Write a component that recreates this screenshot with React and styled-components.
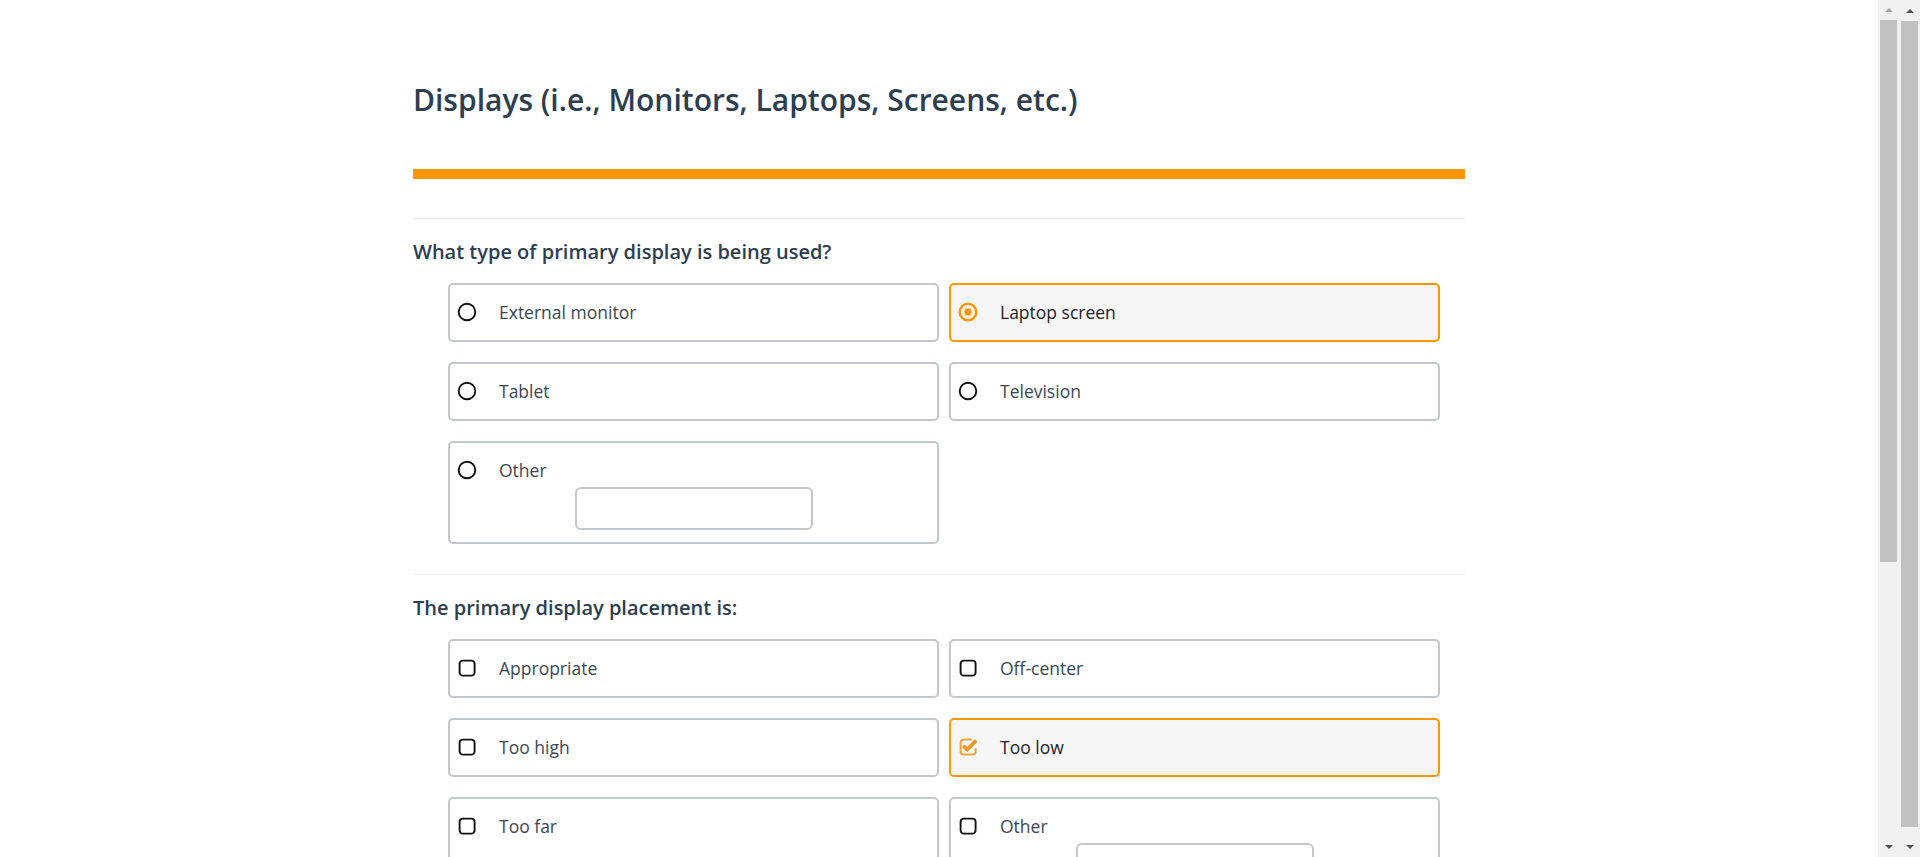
import styled, { createGlobalStyle } from 'styled-components'

const GlobalStyle = createGlobalStyle`
  html, body {
    margin: 0;
    overflow: hidden;
  }

  body {
    background: #ffffff;
    font-family: 'Open Sans', 'Liberation Sans', sans-serif;
  }

  * {
    box-sizing: border-box;
  }
`

const Frame = styled.div`
  display: flex;
  height: 100vh;
`

const Scroller = styled.div`
  flex: 1;
  overflow: hidden;
`

const ScrollBar = styled.div`
  display: flex;
  flex-direction: column;
  align-items: center;
  width: 21px;
  height: 100vh;
  background: #f1f1f1;
`

const Arrow = styled.div`
  display: flex;
  align-items: center;
  justify-content: center;
  height: ${({ $size }) => $size}px;

  &::before {
    content: '';
    border-left: 4px solid transparent;
    border-right: 4px solid transparent;
    ${({ $down }) => ($down ? 'border-top' : 'border-bottom')}: 4px solid
      ${({ $dim }) => ($dim ? '#a3a3a3' : '#505050')};
  }
`

const Thumb = styled.div`
  width: 17px;
  height: ${({ $size }) => $size}px;
  background: #c1c1c1;
`

const Track = styled.div`
  flex: 1;
`

const Container = styled.main`
  width: 1052px;
  margin: 0 auto;
  padding: 82px 0 370px;
`

const Title = styled.h1`
  margin: 0;
  font-size: 30px;
  line-height: 36px;
  font-weight: 600;
  color: #2c3e50;
`

const Accent = styled.div`
  height: 10px;
  margin: 51px 0 39px;
  background: #ff9800;
`

const Section = styled.section`
  padding: 20px 0 30px;
  border-top: 1px solid #e9ecee;
`

const Question = styled.h2`
  margin: 0 0 18px;
  font-size: 20px;
  line-height: 26px;
  font-weight: 600;
  color: #2c3e50;
`

const Options = styled.div`
  display: grid;
  grid-template-columns: repeat(2, 491px);
  gap: 20px 10px;
  margin-left: 35px;
`

const Option = styled.label`
  display: flex;
  flex-direction: column;
  padding: 15px 0 ${({ $other }) => ($other ? '12px' : '16px')};
  border: 2px solid ${({ $checked }) => ($checked ? '#ff9800' : '#c3c7cb')};
  border-radius: 5px;
  background: ${({ $checked }) => ($checked ? '#f6f6f6' : '#ffffff')};
  cursor: pointer;
`

const OptionRow = styled.span`
  display: flex;
  align-items: center;
  height: 24px;
  padding-left: 7px;
`

const IconBox = styled.span`
  display: flex;
  align-items: center;
  justify-content: center;
  width: 20px;
  height: 20px;
`

const Label = styled.span`
  margin-left: 22px;
  font-size: 17.5px;
  color: ${({ $checked }) => ($checked ? '#1e2226' : '#3b4853')};
`

const OtherInput = styled.input`
  align-self: center;
  width: 238px;
  height: 43px;
  margin-top: 5px;
  border: 2px solid #c3c7cb;
  border-radius: 6px;
  outline: none;
`

const ORANGE = '#ff9800'

function RadioIcon({ checked }) {
  return (
    <svg width="20" height="20" viewBox="0 0 20 20">
      <circle cx="10" cy="10" r="8.3" fill="none" stroke={checked ? ORANGE : '#111'} strokeWidth={checked ? 2.5 : 1.9} />
      {checked && <circle cx="10" cy="10" r="3.7" fill={ORANGE} />}
    </svg>
  )
}

function CheckIcon({ checked }) {
  if (checked) {
    return (
      <svg width="20" height="20" viewBox="0 0 20 20">
        <path d="M13.6 2.6H5.6a3 3 0 0 0-3 3v9a3 3 0 0 0 3 3h9a3 3 0 0 0 3-3V11.2" fill="none" stroke="#f9a23d" strokeWidth="2" />
        <path d="M5.2 8.8 9.2 12.6 18.2 3.6" fill="none" stroke="#f7931e" strokeWidth="3.6" />
      </svg>
    )
  }
  return (
    <svg width="20" height="20" viewBox="0 0 20 20">
      <rect x="2.6" y="2.6" width="15" height="15" rx="3.2" fill="none" stroke="#111" strokeWidth="1.9" />
    </svg>
  )
}

const questions = [
  {
    id: 'type',
    text: 'What type of primary display is being used?',
    kind: 'radio',
    options: [
      { label: 'External monitor' },
      { label: 'Laptop screen', checked: true },
      { label: 'Tablet' },
      { label: 'Television' },
      { label: 'Other', other: true },
    ],
  },
  {
    id: 'placement',
    text: 'The primary display placement is:',
    kind: 'checkbox',
    options: [
      { label: 'Appropriate' },
      { label: 'Off-center' },
      { label: 'Too high' },
      { label: 'Too low', checked: true },
      { label: 'Too far' },
      { label: 'Other', other: true },
    ],
  },
]

export default function App() {
  return (
    <>
      <GlobalStyle />
      <Frame>
        <Scroller>
          <Container>
            <Title>Displays (i.e., Monitors, Laptops, Screens, etc.)</Title>
            <Accent />
            {questions.map((q) => (
              <Section key={q.id}>
                <Question>{q.text}</Question>
                <Options>
                  {q.options.map((opt) => (
                    <Option key={opt.label} $checked={opt.checked} $other={opt.other}>
                      <OptionRow>
                        <IconBox>
                          {q.kind === 'radio' ? (
                            <RadioIcon checked={opt.checked} />
                          ) : (
                            <CheckIcon checked={opt.checked} />
                          )}
                        </IconBox>
                        <Label $checked={opt.checked}>{opt.label}</Label>
                      </OptionRow>
                      {opt.other && <OtherInput type="text" />}
                    </Option>
                  ))}
                </Options>
              </Section>
            ))}
          </Container>
        </Scroller>
        <ScrollBar>
          <Arrow $size={20} $dim />
          <Thumb $size={542} />
          <Track />
          <Arrow $size={20} $down />
        </ScrollBar>
        <ScrollBar>
          <Arrow $size={21} />
          <Thumb $size={806} />
          <Track />
          <Arrow $size={20} $down />
        </ScrollBar>
      </Frame>
    </>
  )
}
